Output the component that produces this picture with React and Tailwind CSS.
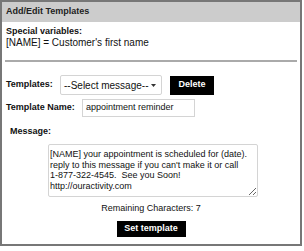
import React from "react";

export default function App() {
  const msg =
    "[NAME] your appointment is scheduled for (date).\nreply to this message if you can't make it or call\n1-877-322-4545.  See you Soon!\nhttp://ouractivity.com";
  return (
    <div className="w-[304px] h-[251px] bg-white font-['Liberation_Sans',Arial,sans-serif] text-[#111]">
      <div className="w-[302px] h-[246px] border-2 border-[#777] flex flex-col">
        <div className="h-[20px] bg-[#cccccc] pl-[4px] flex items-center text-[9px] font-bold text-[#222]">
          Add/Edit Templates
        </div>
        <div className="mt-[3px] pl-[4px] text-[9px] leading-[12px] font-bold">Special variables:</div>
        <div className="pl-[4px] text-[10px] leading-[12px]">[NAME] = Customer's first name</div>
        <div className="mt-[11px] mx-[3px] h-[2px] bg-[#aaaaaa]" />
        <div className="mt-[13px] pl-[4px] flex items-center h-[20px]">
          <span className="w-[54px] text-[9px] font-bold">Templates:</span>
          <div className="w-[102px] h-[20px] border border-[#d4d4d4] rounded-[2px] bg-white flex items-center justify-between pl-[3px] pr-[5px] text-[10px]">
            <span>--Select message--</span>
            <svg width="5" height="3" viewBox="0 0 5 3"><path d="M0 0h5L2.5 3z" fill="#333" /></svg>
          </div>
          <button className="ml-[8px] w-[44px] h-[19px] bg-black text-white text-[9px] font-bold flex items-center justify-center">
            Delete
          </button>
        </div>
        <div className="mt-[4px] pl-[4px] flex items-center h-[18px]">
          <span className="w-[76px] text-[9px] font-bold">Template Name:</span>
          <div className="w-[113px] h-[18px] border border-[#d4d4d4] bg-white flex items-center pl-[3px] text-[9px]">
            appointment reminder
          </div>
        </div>
        <div className="mt-[8px] pl-[8px] text-[9px] leading-[12px] font-bold">Message:</div>
        <div className="mt-[7px] pl-[46px]">
          <textarea
            readOnly
            defaultValue={msg}
            className="block w-[210px] h-[53px] border border-[#d4d4d4] rounded-[2px] bg-white pl-[1px] pt-[4px] pr-0 text-[9px] leading-[10.5px] text-[#111] overflow-hidden font-['Liberation_Sans',Arial,sans-serif]"
          />
        </div>
        <div className="mt-[5px] text-center text-[9px] leading-[12px]">Remaining Characters: 7</div>
        <div className="mt-[7px] flex justify-center">
          <button className="w-[69px] h-[16px] bg-black text-white text-[9px] font-bold flex items-center justify-center">
            Set template
          </button>
        </div>
      </div>
    </div>
  );
}
